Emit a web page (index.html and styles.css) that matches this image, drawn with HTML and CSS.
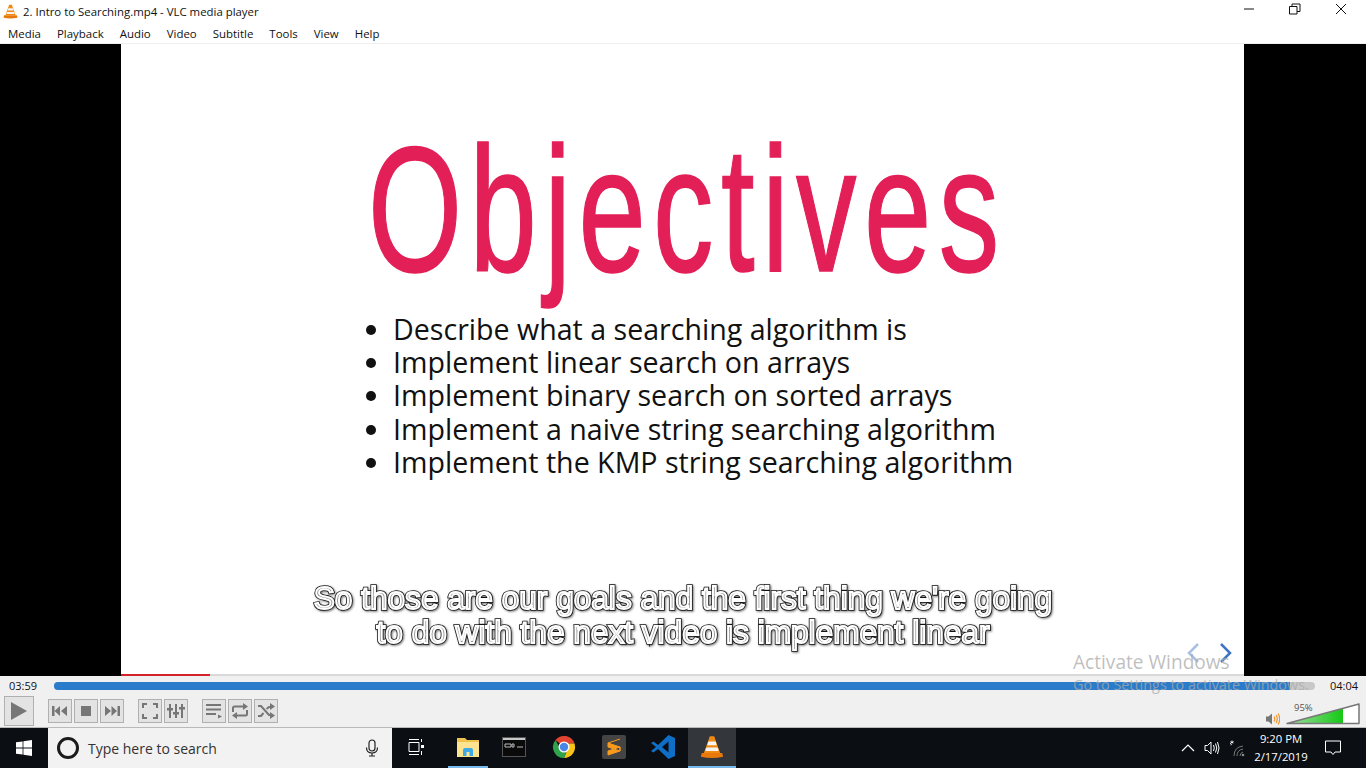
FILE: index.html
```html
<!DOCTYPE html>
<html lang="en">
<head>
    <meta charset="UTF-8">
    <title>2. Intro to Searching.mp4 - VLC media player</title>
    <link rel="stylesheet" href="styles.css">
</head>
<body>
    <svg width="0" height="0" class="defs">
        <symbol id="cone" viewBox="0 0 20 20">
            <path d="M8.2 1h3.6l5 14H3.200z" fill="#f08a12"/>
            <path d="M7 5.500h6l1 3H6z" fill="#f4f4f4"/>
            <path d="M5.300 10.500h9.400l.9 2.800H4.400z" fill="#f4f4f4"/>
            <path d="M1.500 15h17l.8 3.200q-9.300 2-18.600 0z" fill="#e8780c"/>
        </symbol>
    </svg>

    <header class="titlebar">
        <svg class="app-icon"><use href="#cone"/></svg>
        <span class="title">2. Intro to Searching.mp4 - VLC media player</span>
        <div class="window-buttons">
            <svg width="12" height="12" viewBox="0 0 12 12"><path d="M1 6h10" stroke="#111" fill="none"/></svg>
            <svg width="12" height="12" viewBox="0 0 12 12"><path d="M.5 3.500h7.500v7.500H.5zM3 3.500V1h8v7.500H8" stroke="#111" fill="none"/></svg>
            <svg width="12" height="12" viewBox="0 0 12 12"><path d="M1 1l10 10M11 1L1 11" stroke="#111" fill="none"/></svg>
        </div>
    </header>
    <nav class="menubar">
        <span>Media</span>
        <span>Playback</span>
        <span>Audio</span>
        <span>Video</span>
        <span>Subtitle</span>
        <span>Tools</span>
        <span>View</span>
        <span>Help</span>
    </nav>

    <main class="video">
        <section class="slide">
            <h1 class="heading">Objectives</h1>
            <ul class="goals">
                <li>Describe what a searching algorithm is</li>
                <li>Implement linear search on arrays</li>
                <li>Implement binary search on sorted arrays</li>
                <li>Implement a naive string searching algorithm</li>
                <li>Implement the KMP string searching algorithm</li>
            </ul>
            <div class="slide-nav">
                <svg width="14" height="22" viewBox="0 0 14 22"><path d="M12 2L3 11l9 9" stroke="#a9c0e4" stroke-width="2.500" fill="none"/></svg>
                <svg width="14" height="22" viewBox="0 0 14 22"><path d="M2 2l9 9-9 9" stroke="#3f74c4" stroke-width="2.500" fill="none"/></svg>
            </div>
            <div class="slide-progress"><div class="slide-progress-fill"></div></div>
        </section>
        <div class="subtitles">
            <span class="sub-line" data-text="So those are our goals and the first thing we're going">So those are our goals and the first thing we're going</span>
            <span class="sub-line" data-text="to do with the next video is implement linear">to do with the next video is implement linear</span>
        </div>
    </main>

    <section class="controls">
        <div class="seek-row">
            <span class="time">03:59</span>
            <div class="seek"><div class="seek-fill"></div></div>
            <span class="time">04:04</span>
        </div>
        <div class="button-row">
            <button class="btn btn-play"><svg width="18" height="20" viewBox="0 0 18 20"><path d="M1 1l16 9-16 9z" fill="#767676"/></svg></button>
            <div class="group">
                <button class="btn"><svg width="16" height="12" viewBox="0 0 16 12"><path d="M0 1h2.500v10H0zM8 1v10L2.500 6zM15 1v10L9 6z" fill="#767676"/></svg></button>
                <button class="btn"><svg width="12" height="12" viewBox="0 0 12 12"><path d="M1 1h10v10H1z" fill="#767676"/></svg></button>
                <button class="btn"><svg width="16" height="12" viewBox="0 0 16 12"><path d="M1 1v10l6-5zM7.500 1v10l5.500-5zM13.500 1H16v10h-2.500z" fill="#767676"/></svg></button>
            </div>
            <div class="group">
                <button class="btn"><svg width="16" height="16" viewBox="0 0 16 16"><path d="M1 5V1h4M11 1h4v4M15 11v4h-4M5 15H1v-4" stroke="#767676" stroke-width="2" fill="none"/></svg></button>
                <button class="btn"><svg width="18" height="16" viewBox="0 0 18 16"><path d="M3 1v14M9 1v14M15 1v14" stroke="#767676" stroke-width="2" fill="none"/><path d="M0 5h6v2.500H0zM6 9h6v2.500H6zM12 4h6v2.500h-6z" fill="#767676"/></svg></button>
            </div>
            <div class="group">
                <button class="btn"><svg width="18" height="16" viewBox="0 0 18 16"><path d="M1 2h15M1 6.500h15M1 11h10" stroke="#767676" stroke-width="2" fill="none"/><path d="M13 11.500v4l4-2z" fill="#767676"/></svg></button>
                <button class="btn"><svg width="18" height="16" viewBox="0 0 18 16"><path d="M2 9V5q0-1.500 1.500-1.500H13M16 7v4q0 1.500-1.500 1.500H5" stroke="#767676" stroke-width="2" fill="none"/><path d="M12 0l5 3.500-5 3.500zM6 9l-5 3.500L6 16z" fill="#767676"/></svg></button>
                <button class="btn"><svg width="18" height="16" viewBox="0 0 18 16"><path d="M1 3h3l8 9h2M1 13h3l2.500-3M9.500 6L12 4h2" stroke="#767676" stroke-width="2" fill="none"/><path d="M13 0l5 3.500L13 7zM13 9l5 3.500-5 3.500z" fill="#767676"/></svg></button>
            </div>
            <div class="volume">
                <svg class="speaker" width="14" height="14" viewBox="0 0 14 14"><path d="M0 4.500h2.500L6 1.500v11l-3.500-3H0z" fill="#767676"/><path d="M8 4.500q1.500 2.500 0 5M10 3q2.500 4 0 8M12 1.500q3.500 5.500 0 11" stroke="#f0932b" stroke-width="1.200" fill="none"/></svg>
                <div class="volume-meter">
                    <span class="volume-label">95%</span>
                    <svg width="74" height="22" viewBox="0 0 74 22">
                        <defs><linearGradient id="volgrad"><stop offset="0" stop-color="#a6dfa6"/><stop offset="1" stop-color="#14c814"/></linearGradient></defs>
                        <path d="M1 20.500L73 1v19.500z" fill="#fff"/>
                        <path d="M1 20.500L57 5.300v15.200z" fill="url(#volgrad)"/>
                        <path d="M1 20.500L73 1v19.500z" fill="none" stroke="#777" stroke-width="1.500" stroke-linejoin="round"/>
                    </svg>
                </div>
            </div>
        </div>
    </section>

    <div class="watermark">
        <div class="watermark-title">Activate Windows</div>
        <div class="watermark-text">Go to Settings to activate Windows.</div>
    </div>

    <footer class="taskbar">
        <div class="start">
            <svg width="16" height="16" viewBox="0 0 16 16"><path d="M0 2.300l6.600-.9v6.200H0zM7.400 1.300L16 0v7.600H7.400zM0 8.400h6.600v6.200L0 13.700zM7.400 8.400H16V16l-8.600-1.300z" fill="#fff"/></svg>
        </div>
        <div class="search">
            <span class="cortana"></span>
            <span class="search-text">Type here to search</span>
            <svg class="mic" width="14" height="18" viewBox="0 0 14 18"><rect x="4" y="1" width="6" height="11" rx="3" fill="none" stroke="#222" stroke-width="1.200"/><path d="M1.500 8.500q0 5.500 5.500 5.500t5.500-5.500M7 14v3M4 17h6" fill="none" stroke="#222" stroke-width="1.200"/></svg>
        </div>
        <div class="tasks">
            <div class="task task-view">
                <svg width="16" height="16" viewBox="0 0 16 16"><path d="M1 .5h10M1 15.500h10M1 3.500h10v9H1zM13.500 0v3M13.500 12v4" stroke="#fff" fill="none"/><path d="M13 6h3v3h-3z" fill="#fff"/></svg>
            </div>
            <div class="task task-open">
                <svg width="22" height="20" viewBox="0 0 22 20"><path d="M0 1h8l2 2h12v17H0z" fill="#f0c24e"/><path d="M0 5h22v15H0z" fill="#fbe38f"/><path d="M6 19v-6q0-2 2-2h6q2 0 2 2v6h-3.500v-4h-3v4z" fill="#3fa9e8"/></svg>
            </div>
            <div class="task">
                <svg width="24" height="20" viewBox="0 0 24 20"><rect width="24" height="20" fill="#555"/><rect x="1" y="3" width="22" height="16" fill="#0a0a0a"/><rect x="1" y="1" width="22" height="2" fill="#c8c8c8"/><path d="M3 7h6v3H3zM10 7h2v3h-2zM15 10h6" stroke="#bbb" fill="none"/></svg>
            </div>
            <div class="task">
                <svg width="24" height="24" viewBox="0 0 24 24">
                    <path d="M12 12L3.500 5A11 11 0 0 1 22.500 8.500H12z" fill="#e2442f"/>
                    <path d="M12 23A11 11 0 0 0 22.500 8.500H12l3 7z" fill="#f8c517"/>
                    <path d="M3.500 5A11 11 0 0 0 12 23l3-7.500H9z" fill="#2fa24c"/>
                    <circle cx="12" cy="12" r="5.500" fill="#fff"/>
                    <circle cx="12" cy="12" r="4.200" fill="#4a86e8"/>
                </svg>
            </div>
            <div class="task">
                <div class="sublime"><svg width="14" height="18" viewBox="0 0 14 18"><path d="M13 1L1 5v4l12 4V9L1 5M13 9v4L1 17v-4z" fill="#f89a1c" stroke="#f89a1c" stroke-linejoin="round"/></svg></div>
            </div>
            <div class="task">
                <svg width="24" height="24" viewBox="0 0 24 24"><path d="M17.500 0L24 3v18l-6.500 3L7 14l-4.500 3.500L0 16l5-4-5-4 2.500-1.500L7 10zM17.500 6.500L11 12l6.500 5.500z" fill="#0f6fc6"/></svg>
            </div>
            <div class="task task-active">
                <svg width="24" height="24"><use href="#cone"/></svg>
            </div>
        </div>
        <div class="tray">
            <svg width="14" height="8" viewBox="0 0 14 8"><path d="M1 7l6-6 6 6" stroke="#fff" stroke-width="1.200" fill="none"/></svg>
            <svg width="16" height="14" viewBox="0 0 16 14"><path d="M1 4.500h2.500L7 1v12L3.500 9.500H1z" stroke="#fff" fill="none"/><path d="M9.500 4q1.500 3 0 6M11.500 2.500q2.500 4.500 0 9M13.500 1q3 6 0 12" stroke="#fff" fill="none"/></svg>
            <svg class="wifi" width="18" height="18" viewBox="0 0 18 18"><path d="M1 4l1.500 1.500-1 .5M3 1.500v3M1.500 2.500l3 1.500M4.500 2.500L1.500 4" stroke="#fff" fill="none" stroke-width=".8"/><path d="M5 17q0-9 9-10M8 17q0-6 6-7M11 17q0-3 3-4" stroke="#777" fill="none"/><circle cx="14" cy="16" r="1.300" fill="#888"/></svg>
            <div class="clock">
                <div>9:20 PM</div>
                <div>2/17/2019</div>
            </div>
            <svg class="action" width="16" height="16" viewBox="0 0 16 16"><path d="M.5 1h15v11H10l-2 2.500L6 12H.5z" stroke="#fff" fill="none"/></svg>
        </div>
    </footer>
</body>
</html>
```

FILE: styles.css
```css
* {
    box-sizing: border-box;
}

html, body {
    margin: 0;
    padding: 0;
}

body {
    position: relative;
    width: 1366px;
    height: 768px;
    overflow: hidden;
    background: #fff;
    font-family: 'Open Sans', sans-serif;
    font-size: 12px;
    color: #111;
    display: flex;
    flex-direction: column;
}

.defs {
    position: absolute;
}

/* window chrome */
.titlebar {
    height: 22px;
    display: flex;
    align-items: center;
    padding-left: 3px;
    flex: none;
}

.app-icon {
    width: 15px;
    height: 15px;
    margin-right: 5px;
}

.title {
    font-size: 11.400px;
    flex: 1;
}

.window-buttons {
    display: flex;
    gap: 34px;
    padding-right: 19px;
    margin-top: -4px;
}

.menubar {
    height: 22px;
    display: flex;
    align-items: center;
    padding: 1px 0 0 8px;
    gap: 16px;
    font-size: 11.450px;
    flex: none;
    border-bottom: 1px solid #f0f0f0;
}

/* video area */
.video {
    position: relative;
    height: 632px;
    flex: none;
    background: #000;
    padding: 0 122px 0 121px;
}

.slide {
    position: relative;
    height: 100%;
    background: #fff;
    padding-left: 247px;
    overflow: hidden;
}

.heading {
    margin: 0;
    padding-top: 71px;
    height: 261px;
    font-family: 'Liberation Sans', sans-serif;
    font-weight: 400;
    font-size: 178px;
    line-height: 190px;
    letter-spacing: 10.800px;
    color: #e31f57;
    -webkit-text-stroke: 1.500px #e31f57;
    white-space: nowrap;
    transform: scaleX(0.68);
    transform-origin: 0 0;
}

.goals {
    margin: 7px 0 0 4px;
    padding-left: 21px;
    font-size: 28.600px;
    line-height: 33.200px;
    color: #111;
    white-space: nowrap;
}

.slide-nav {
    position: absolute;
    right: 11px;
    bottom: 12px;
    display: flex;
    gap: 19px;
}

.slide-progress {
    position: absolute;
    left: 0;
    right: 0;
    bottom: 0;
    height: 2px;
    background: #d8d8d8;
}

.slide-progress-fill {
    width: 89px;
    height: 100%;
    background: #d3222a;
}

/* white letters, grey core, black rim */
.subtitles {
    position: absolute;
    z-index: 1;
    left: 0;
    right: 0;
    top: 537px;
    text-align: center;
    font-family: 'Liberation Sans', sans-serif;
    font-size: 31.600px;
    line-height: 34px;
    color: #8a8a8a;
    -webkit-text-stroke: 2px #fff;
    filter: drop-shadow(1px 1px 1px #777);
}

.sub-line {
    position: relative;
    display: block;
}

.sub-line::before {
    content: attr(data-text);
    position: absolute;
    z-index: -1;
    left: 0;
    right: 0;
    color: #111;
    -webkit-text-stroke: 3.600px #111;
}

/* player controls */
.controls {
    height: 52px;
    flex: none;
    background: #f0f0f0;
    border-bottom: 1px solid #b9b9b9;
}

.seek-row {
    height: 19px;
    display: flex;
    align-items: center;
    padding: 0 6px 0 9px;
    font-size: 11px;
}

.time {
    width: 45px;
}

.time:last-child {
    width: 30px;
    margin-left: 15px;
}

.seek {
    flex: 1;
    height: 8px;
    background: #c8c8c8;
    border-radius: 4px;
    overflow: hidden;
}

.seek-fill {
    width: 98%;
    height: 100%;
    background: #2a7ccb;
}

.button-row {
    display: flex;
    align-items: center;
    padding-left: 4px;
    height: 31px;
}

.group {
    display: flex;
    gap: 2px;
    margin-left: 14px;
}

.btn {
    width: 24px;
    height: 24px;
    padding: 0;
    border: 1px solid #b0b0b0;
    background: #e3e3e3;
    display: flex;
    align-items: center;
    justify-content: center;
}

.btn-play {
    width: 30px;
    height: 30px;
}

.volume {
    margin-left: auto;
    display: flex;
    align-items: flex-end;
    gap: 6px;
    padding-right: 6px;
    height: 28px;
}

.speaker {
    margin-bottom: -1px;
}

.volume-meter {
    position: relative;
    height: 22px;
}

.volume-label {
    position: absolute;
    left: 8px;
    top: -2px;
    font-size: 9.500px;
    color: #555;
}

.watermark {
    position: absolute;
    left: 1073px;
    top: 650px;
    color: rgba(170, 170, 170, 0.75);
    white-space: nowrap;
}

.watermark-title {
    font-size: 19.100px;
    line-height: 24px;
}

.watermark-text {
    font-size: 14.400px;
    line-height: 22px;
}

/* windows taskbar */
.taskbar {
    flex: 1;
    display: flex;
    background: #0b0f14;
    color: #fff;
}

.start {
    width: 48px;
    display: flex;
    align-items: center;
    justify-content: center;
}

.search {
    width: 344px;
    background: #f2f2f2;
    display: flex;
    align-items: center;
    padding: 0 13px 0 9px;
    color: #333;
}

.cortana {
    width: 22px;
    height: 22px;
    border: 3px solid #1b1b1b;
    border-radius: 50%;
}

.search-text {
    flex: 1;
    margin-left: 9px;
    font-size: 14px;
}

.tasks {
    display: flex;
}

.task {
    width: 49.600px;
    display: flex;
    align-items: center;
    justify-content: center;
    border-bottom: 2px solid transparent;
}

.task-view {
    width: 48px;
}

.task-open {
    width: 40px;
    margin: 0 1.600px 0 8px;
    border-bottom-color: #76b9ed;
}

.task-active {
    width: 48px;
    background: #33363b;
    border-bottom-color: #76b9ed;
}

.sublime {
    width: 24px;
    height: 24px;
    background: #444;
    border-radius: 2px;
    display: flex;
    align-items: center;
    justify-content: center;
}

.tray {
    margin-left: auto;
    display: flex;
    align-items: center;
    padding-right: 25px;
}

.tray svg {
    margin-right: 9px;
}

.tray .wifi {
    margin-right: 4px;
}

.clock {
    width: 60px;
    margin-right: 14px;
    text-align: center;
    font-size: 11.300px;
    line-height: 18px;
}

.tray .action {
    margin-right: 0;
}
```
